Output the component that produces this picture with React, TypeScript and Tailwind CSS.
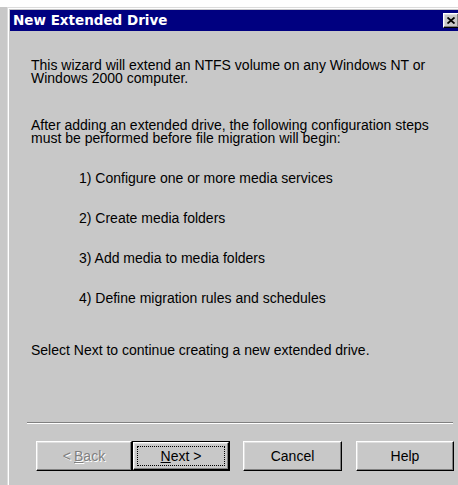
import React from 'react';

const steps = [
  '1) Configure one or more media services',
  '2) Create media folders',
  '3) Add media to media folders',
  '4) Define migration rules and schedules',
];

// classic raised 3D button edge
const raised =
  'border border-t-white border-l-white border-r-black border-b-black shadow-[inset_-1px_-1px_0_#808080,inset_1px_1px_0_#dfdfdf]';

function WizardButton({
  children,
  width,
  isDefault,
  disabled,
}: {
  children: React.ReactNode;
  width: string;
  isDefault?: boolean;
  disabled?: boolean;
}) {
  if (isDefault) {
    return (
      <div className={`${width} h-[30px] border border-black`}>
        <div className={`h-full w-full ${raised} bg-[#c8c8c8] flex items-center justify-center p-[3px]`}>
          <div className="h-full w-full border border-dotted border-black flex items-center justify-center text-[14px] text-black">
            {children}
          </div>
        </div>
      </div>
    );
  }
  return (
    <div
      className={`${width} h-[30px] ${raised} bg-[#c8c8c8] flex items-center justify-center text-[14px] ${
        disabled ? 'text-[#808080] [text-shadow:1px_1px_0_#ffffff]' : 'text-black'
      }`}
    >
      {children}
    </div>
  );
}

export default function App() {
  return (
    <div className="w-[458px] h-[485px] overflow-hidden bg-[#c8c8c8] font-['Liberation_Sans',Arial,sans-serif]">
      <div className="h-[7px] bg-white" />
      <div className="ml-[7px] w-[457px] h-[490px] border-t border-l border-[#dcdcdc]">
        <div className="h-full border-t border-l border-white pt-[1px] pl-[1px]">
          {/* title bar */}
          <div className="h-[21px] bg-[#000080] flex items-center pl-[3px] pr-[5px]">
            <span className="flex-1 text-white font-bold text-[13.5px] font-['DejaVu_Sans',sans-serif]">
              New Extended Drive
            </span>
            <div className={`w-[16px] h-[15px] bg-[#c8c8c8] ${raised} flex items-center justify-center`}>
              <svg width="8" height="7" viewBox="0 0 8 7">
                <path d="M0.5 0.5 L7.5 6.5 M7.5 0.5 L0.5 6.5" stroke="#000" strokeWidth="1.8" />
              </svg>
            </div>
          </div>

          {/* wizard body */}
          <div className="pl-[21px] text-[14px] leading-[13px] text-black">
            <p className="mt-[28px] w-[410px]">
              This wizard will extend an NTFS volume on any Windows NT or Windows 2000 computer.
            </p>
            <p className="mt-[34px] w-[410px]">
              After adding an extended drive, the following configuration steps must be performed before file
              migration will begin:
            </p>
            <div className="mt-[27px] pl-[48px] flex flex-col gap-[27px]">
              {steps.map((s) => (
                <div key={s}>{s}</div>
              ))}
            </div>
            <p className="mt-[39px]">Select Next to continue creating a new extended drive.</p>
          </div>

          {/* separator */}
          <div className="ml-[17px] mt-[65px] w-[426px] h-[2px] border-t border-[#808080] border-b border-b-white" />

          {/* buttons */}
          <div className="mt-[17px] ml-[26px] flex">
            <WizardButton width="w-[96px]" disabled>
              &lt; <span className="underline ml-[3px]">B</span>ack
            </WizardButton>
            <WizardButton width="w-[98px]" isDefault>
              <span className="underline">N</span>ext &gt;
            </WizardButton>
            <div className="ml-[13px]">
              <WizardButton width="w-[99px]">Cancel</WizardButton>
            </div>
            <div className="ml-[14px]">
              <WizardButton width="w-[98px]">Help</WizardButton>
            </div>
          </div>
        </div>
      </div>
    </div>
  );
}
